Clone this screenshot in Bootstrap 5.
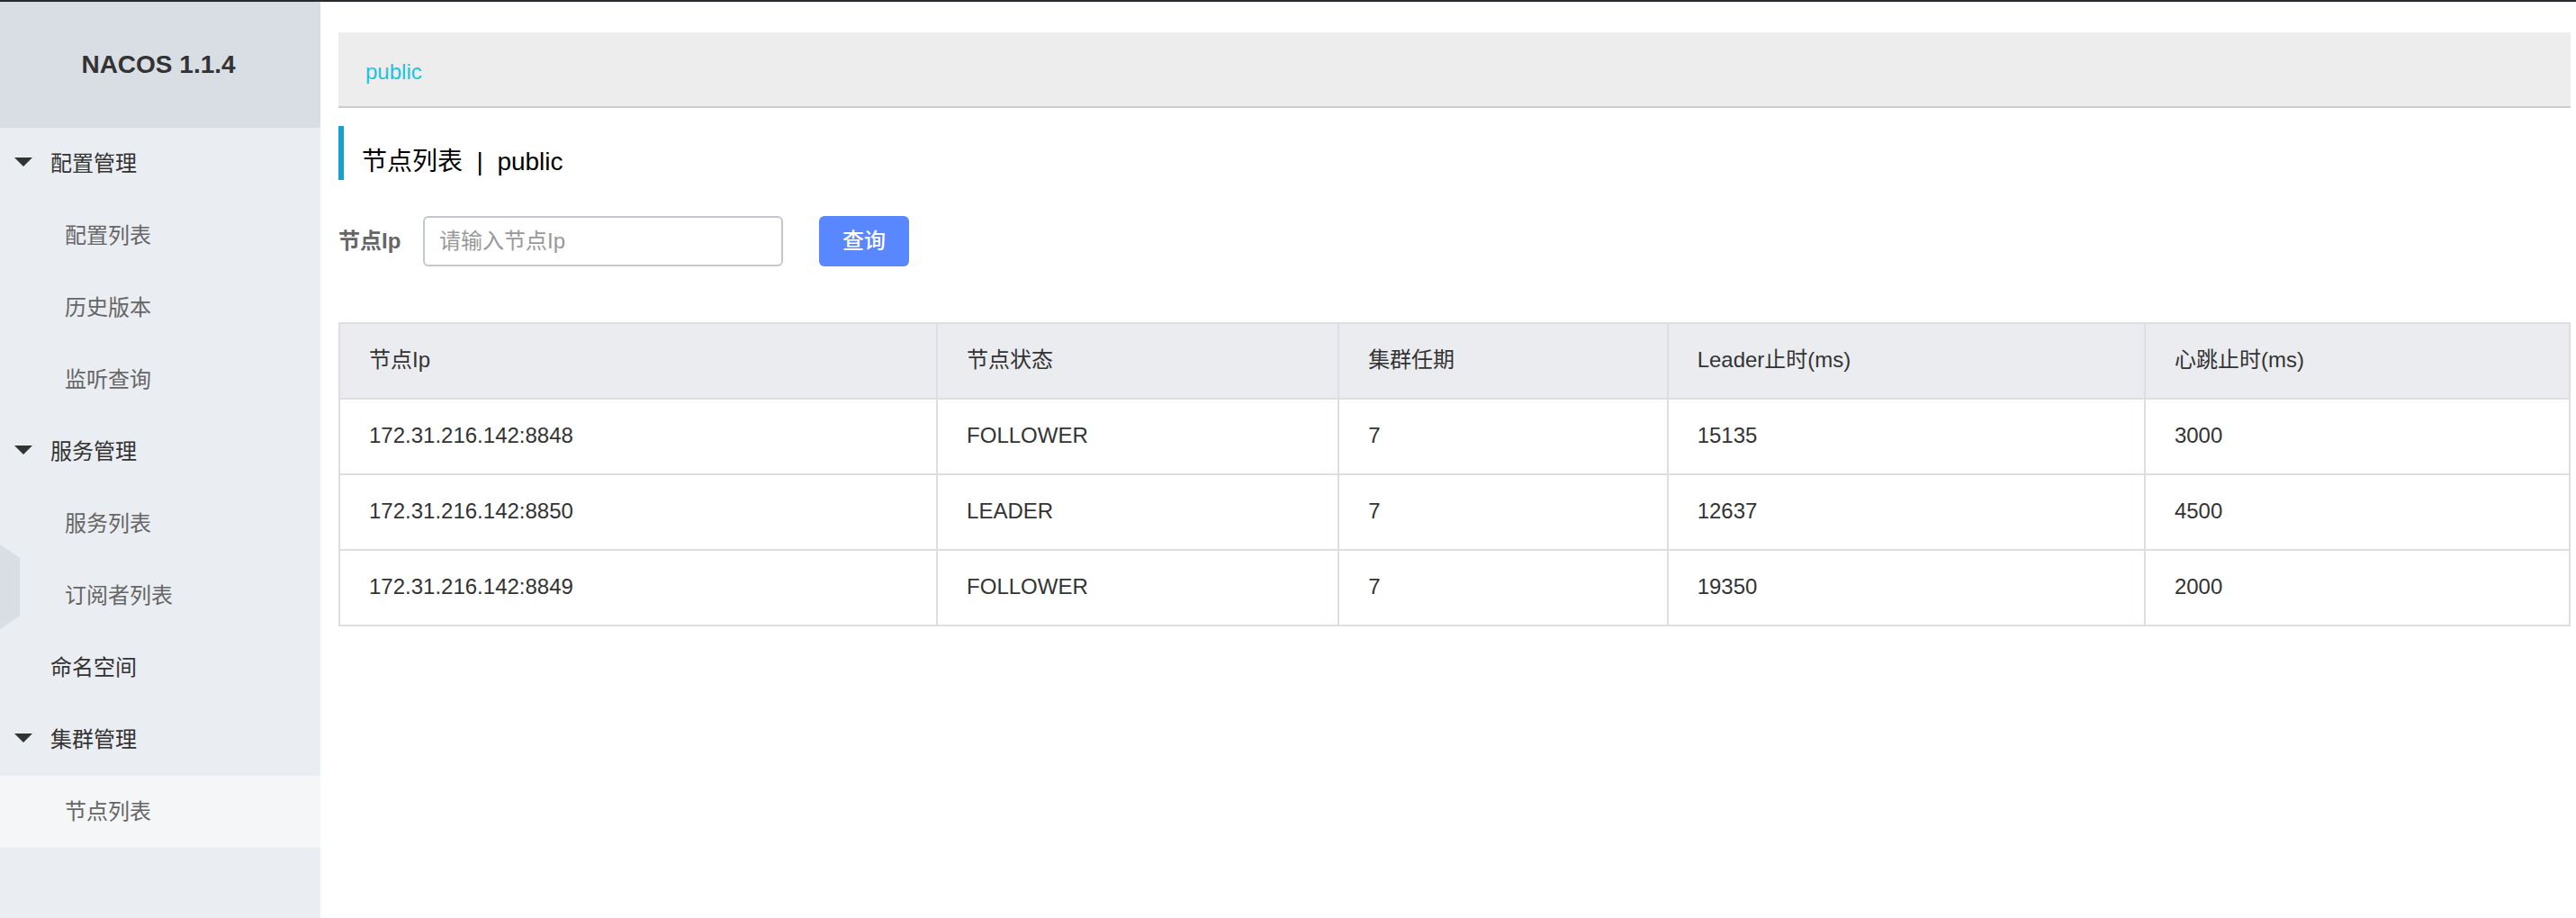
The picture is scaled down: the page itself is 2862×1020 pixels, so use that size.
<!DOCTYPE html>
<html lang="zh-CN">
<head>
<meta charset="utf-8">
<meta name="viewport" content="width=device-width, initial-scale=1">
<title>Nacos</title>
<link href="https://cdn.jsdelivr.net/npm/bootstrap@5.3.0/dist/css/bootstrap.min.css" rel="stylesheet">
<style>
  body {
    font-family: "Liberation Sans", "Noto Sans CJK SC", sans-serif;
    font-size: 24px;
    line-height: 36px;
    color: #333;
    border-top: 2px solid #272b30;
  }
  .side-panel { width: 356px; background: #eaedf1; }
  .brand-box { height: 140px; background: #d9dde4; font-size: 28px; padding-right: 4px; }
  .side-link {
    display: flex;
    align-items: center;
    height: 80px;
    padding-left: 56px;
    color: #333;
    text-decoration: none;
  }
  .side-group { padding-left: 16px; gap: 20px; }
  .side-group svg { width: 20px; height: 10px; margin-bottom: 4px; fill: #333; }
  .side-sub { padding-left: 72px; color: #666; }
  .side-sub.current { background: #f4f6f8; }
  .fold-handle { left: 0; top: 603px; width: 22px; height: 94px; }
  .fold-handle svg { display: block; fill: #d9dde4; }
  .main-panel { padding: 34px 6px 34px 20px; }
  .space-bar {
    height: 84px;
    padding: 6px 30px 0;
    background: #ededed;
    border-bottom: 2px solid #ccc;
  }
  .space-bar a { color: #1bc3de; text-decoration: none; }
  .page-title {
    height: 60px;
    margin: 20px 0 40px;
    padding: 20px 0 0 20px;
    border-left: 6px solid #189fce;
    color: #000;
    font-size: 28px;
    line-height: 40px;
    font-weight: 400;
  }
  .search-row { height: 56px; margin-bottom: 62px; }
  .search-row label { color: #666; font-weight: 700; width: 94px; }
  .search-row .form-control {
    width: 400px;
    height: 56px;
    padding: 0 16px;
    border: 2px solid #c4c6cf;
    border-radius: 6px;
    font-size: 24px;
    color: #333;
  }
  .search-row .form-control::placeholder { color: #999; }
  .search-row .btn {
    width: 100px;
    height: 56px;
    margin-left: 40px;
    padding: 0;
    border: 0;
    border-radius: 6px;
    background: #5887ff;
    color: #fff;
    font-size: 24px;
    font-weight: 500;
  }
  .node-table {
    table-layout: fixed;
    border-collapse: separate;
    border-spacing: 0;
    border: solid #dcdee3;
    border-width: 2px 0 0 2px;
  }
  .node-table th, .node-table td {
    height: 84px;
    padding: 0 32px 2px;
    border: solid #dcdee3;
    border-width: 0 2px 2px 0;
    font-weight: 400;
    vertical-align: middle;
  }
  .node-table th { background: #ebecf0; }
  .col-ip { width: 26.8%; }
  .col-state { width: 18%; }
  .col-term { width: 14.75%; }
  .col-leader { width: 21.4%; }
</style>
</head>
<body class="d-flex min-vh-100 position-relative">
  <aside class="side-panel flex-shrink-0">
    <div class="brand-box d-flex align-items-center justify-content-center fw-bold">NACOS 1.1.4</div>
    <nav aria-label="主菜单">
      <a class="side-link side-group" href="#"><svg viewBox="0 0 20 10" aria-hidden="true"><path d="M0 0h20L10 10z"/></svg>配置管理</a>
      <a class="side-link side-sub" href="#">配置列表</a>
      <a class="side-link side-sub" href="#">历史版本</a>
      <a class="side-link side-sub" href="#">监听查询</a>
      <a class="side-link side-group" href="#"><svg viewBox="0 0 20 10" aria-hidden="true"><path d="M0 0h20L10 10z"/></svg>服务管理</a>
      <a class="side-link side-sub" href="#">服务列表</a>
      <a class="side-link side-sub" href="#">订阅者列表</a>
      <a class="side-link" href="#">命名空间</a>
      <a class="side-link side-group" href="#"><svg viewBox="0 0 20 10" aria-hidden="true"><path d="M0 0h20L10 10z"/></svg>集群管理</a>
      <a class="side-link side-sub current" href="#" aria-current="page">节点列表</a>
    </nav>
    <button type="button" class="fold-handle position-absolute border-0 bg-transparent p-0" aria-label="收起菜单"><svg width="22" height="94" viewBox="0 0 22 94" aria-hidden="true"><path d="M0 0l22 15v64L0 94z"/></svg></button>
  </aside>
  <main class="main-panel flex-grow-1">
    <div class="space-bar d-flex align-items-center"><a href="#">public</a></div>
    <h1 class="page-title">节点列表&nbsp;&nbsp;|&nbsp;&nbsp;public</h1>
    <form class="search-row d-flex align-items-center">
      <label for="nodeIp">节点Ip</label>
      <input type="text" class="form-control" id="nodeIp" placeholder="请输入节点Ip">
      <button type="button" class="btn">查询</button>
    </form>
    <table class="node-table w-100">
      <thead>
        <tr>
          <th class="col-ip" scope="col">节点Ip</th>
          <th class="col-state" scope="col">节点状态</th>
          <th class="col-term" scope="col">集群任期</th>
          <th class="col-leader" scope="col">Leader止时(ms)</th>
          <th scope="col">心跳止时(ms)</th>
        </tr>
      </thead>
      <tbody>
        <tr><td>172.31.216.142:8848</td><td>FOLLOWER</td><td>7</td><td>15135</td><td>3000</td></tr>
        <tr><td>172.31.216.142:8850</td><td>LEADER</td><td>7</td><td>12637</td><td>4500</td></tr>
        <tr><td>172.31.216.142:8849</td><td>FOLLOWER</td><td>7</td><td>19350</td><td>2000</td></tr>
      </tbody>
    </table>
  </main>
<script src="https://cdn.jsdelivr.net/npm/bootstrap@5.3.0/dist/js/bootstrap.bundle.min.js"></script>
</body>
</html>
